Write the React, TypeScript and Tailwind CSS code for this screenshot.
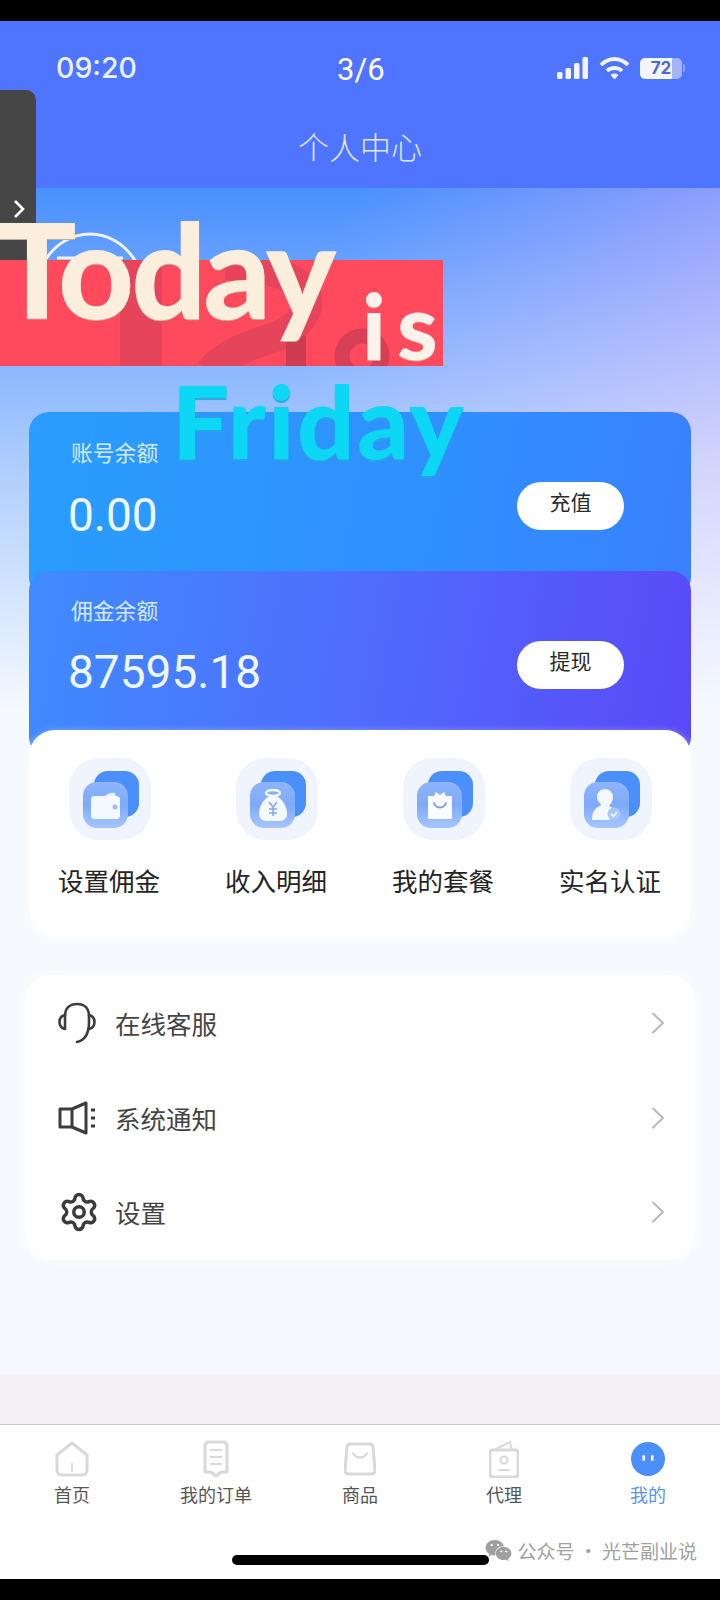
import { Settings } from "lucide-react";
import { FaWeixin } from "react-icons/fa";

const CJK = "font-['Noto_Sans_CJK_SC','Noto_Sans',sans-serif]";

function Chevron() {
  return (
    <svg width="14" height="22" viewBox="0 0 14 22" fill="none" stroke="#b8b8b8" strokeWidth="2">
      <path d="M2 1.5 12 11 2 20.5" strokeLinejoin="round" strokeLinecap="round" />
    </svg>
  );
}

function Headset() {
  return (
    <svg width="38" height="42" viewBox="0 0 38 42" fill="none" stroke="#3c3c3c" strokeWidth="2.6" strokeLinecap="round" strokeLinejoin="round">
      <path d="M7 14C7 6 12 2 19 2s12 4 12 12v6c0 11-3 18-12 20" />
      <path d="M7 13C3 14 1.500 17 1.500 20S3 26 7 27Z" />
      <path d="M31 13c4 1 5.500 4 5.500 7s-1.500 6-5.500 7" />
    </svg>
  );
}

function Speaker() {
  return (
    <svg width="38" height="34" viewBox="0 0 38 34" fill="none" stroke="#3c3c3c" strokeWidth="3" strokeLinejoin="round">
      <path d="M2 8h12v18H2Z" />
      <path d="M14 8 28 2v30L14 26" />
      <path d="M33 9h4M33 17h4M33 25h4" />
    </svg>
  );
}

function WalletGlyph() {
  return (
    <svg width="30" height="27" viewBox="0 0 30 27">
      <path d="M14 4c3-3 7-4 10-3l1 4Z" fill="#e6efff" />
      <rect x="0" y="4" width="29" height="23" rx="3.500" fill="#f4f8ff" />
      <circle cx="24" cy="15" r="2.500" fill="#9dbdf8" />
    </svg>
  );
}

function BagGlyph() {
  return (
    <svg width="28" height="32" viewBox="0 0 28 32" fill="none">
      <ellipse cx="14" cy="4" rx="7" ry="3" stroke="#f4f8ff" strokeWidth="2.400" />
      <path d="M9 8h10c5 3 9 10 9 17 0 4-3 7-7 7H7c-4 0-7-3-7-7 0-7 4-14 9-17Z" fill="#f4f8ff" />
      <path d="M10 13l4 5 4-5M14 18v9M10 20h8M10 24h8" stroke="#7fa8f5" strokeWidth="1.500" />
    </svg>
  );
}

function PackageGlyph() {
  return (
    <svg width="24" height="27" viewBox="0 0 24 27">
      <path d="M0 4h6l2-4 4 3 4-3 2 4h6v23H0Z" fill="#fbfcff" />
      <path d="M6 11c2 6 10 6 12 0" stroke="#6f97e8" strokeWidth="1.800" fill="none" strokeLinecap="round" />
    </svg>
  );
}

function PersonGlyph() {
  return (
    <svg width="30" height="33" viewBox="0 0 30 33">
      <path d="M13 0c5 0 8 4 8 8 0 4-2 7-4 9 2 1 4 2 6 3-4 2-6 6-5 11H0c0-7 2-11 6-13 2-1 3-2 3-3-2-1-4-4-4-7 0-4 3-8 8-8Z" fill="#f4f8ff" />
      <circle cx="22" cy="25" r="6.500" fill="#a9c6fb" />
      <path d="M19 25l2.500 2.500 3.500-4.500" stroke="#eef4ff" strokeWidth="1.800" fill="none" />
    </svg>
  );
}

function ActionItem({ label, glyph }: { label: string; glyph: React.ReactNode }) {
  return (
    <div className="flex flex-col items-center">
      <div className="relative ml-[2px] h-[82px] w-[82px] rounded-[30px] bg-[#f0f4fe]">
        <div className="absolute left-[25px] top-[13px] h-[46px] w-[45px] rounded-[14px] bg-[#4a8ffa]" />
        <div className="absolute left-[14px] top-[24px] flex h-[46px] w-[45px] items-center justify-center rounded-[14px] bg-gradient-to-b from-[#8fb5fb] via-[#7eaafa] to-[#a6c6fe]">
          {glyph}
        </div>
      </div>
      <span className="mt-[21px] whitespace-nowrap text-[25.5px] leading-[38px] text-[#242424]">{label}</span>
    </div>
  );
}

function MenuRow({ icon, label }: { icon: React.ReactNode; label: string }) {
  return (
    <div className="flex h-[94.5px] items-center pl-[33px] pr-[30px]">
      <div className="flex w-[57px] items-center">{icon}</div>
      <span className="flex-1 text-[25.5px] text-[#444]">{label}</span>
      <Chevron />
    </div>
  );
}

function BalanceCard({
  label,
  value,
  action,
  className,
  labelClass,
  valueClass,
  buttonClass,
}: {
  label: string;
  value: string;
  action: string;
  className: string;
  labelClass: string;
  valueClass: string;
  buttonClass: string;
}) {
  return (
    <div className={`rounded-[20px] pl-[42px] pr-[67px] ${className}`}>
      <div className={`text-[21.8px] leading-[32px] text-[#d6ebff] ${labelClass}`}>{label}</div>
      <div className={`flex items-start justify-between ${valueClass}`}>
        <span className="ml-[-3px] font-['Roboto',sans-serif] text-[46px] leading-[56px] text-[#eef7ff]">{value}</span>
        <button className={`h-[48px] w-[107px] rounded-full bg-white pb-[10px] text-[21px] leading-[32px] text-[#2b2b2b] ${buttonClass}`}>
          {action}
        </button>
      </div>
    </div>
  );
}

function TabItem({ icon, label, active }: { icon: React.ReactNode; label: string; active?: boolean }) {
  return (
    <div className="flex w-[144px] flex-col items-center">
      <div className="flex h-[38px] items-center justify-center">{icon}</div>
      <span className={`mt-[3px] text-[18px] leading-[26px] ${active ? "text-[#5b94e8]" : "text-[#555]"}`}>{label}</span>
    </div>
  );
}

function Sticker() {
  return (
    <div className="pointer-events-none absolute left-0 top-0 h-[500px] w-[720px] overflow-hidden font-['Lato',sans-serif] font-black">
      <svg className="absolute left-[38px] top-[228px]" width="110" height="36" viewBox="0 0 110 36" fill="none">
        <path d="M6 34C18 14 36 6 52 6s34 8 46 28" stroke="#eef3ff" strokeWidth="3" />
        <path d="M19 30h66" stroke="#eef3ff" strokeWidth="3" />
      </svg>
      <div className="absolute left-0 top-[260px] h-[106px] w-[443px] overflow-hidden bg-[#ff4a5e]">
        <svg width="443" height="106" viewBox="0 0 443 106" fill="none">
          <path d="M120 0h42v106h-42Z" fill="#e6445b" />
          <path d="M225 5C285 5 325 30 300 60 280 85 235 80 210 112" stroke="#e6445b" strokeWidth="30" />
          <path d="M286 76h20v30h-20Z" fill="#cf3c52" />
          <circle cx="362" cy="96" r="20" stroke="#d63f55" strokeWidth="15" />
        </svg>
      </div>
      <div className="absolute left-[-3px] top-[188px] text-[132px] leading-[160px] tracking-[-3px] text-[#fbeedd] [text-shadow:0_1px_0_#c9a898]">
        Today
      </div>
      <div className="absolute left-[362px] top-[269px] text-[92px] leading-[112px] tracking-[11px] text-[#fff2ea] [text-shadow:0_1px_0_#d9a0a0]">
        is
      </div>
      <div className="absolute left-[172px] top-[359px] text-[101px] leading-[122px] tracking-[2.500px] text-[#0cd7f4] [text-shadow:0_2px_1px_#2ba6e0]">
        Friday
      </div>
    </div>
  );
}

export default function App() {
  return (
    <div className={`relative flex h-[1600px] w-[720px] flex-col overflow-hidden bg-black ${CJK}`}>
      <div className="h-[21px] shrink-0 bg-black" />

      <header className="h-[167px] shrink-0 bg-[#4f74fe] text-white">
        <div className="flex items-center justify-between pl-[56px] pr-[35px] pt-[29px]">
          <span className="font-['Inter',sans-serif] text-[28.5px] font-medium leading-[36px] text-[#eaf0ff]">09:20</span>
          <div className="flex items-center">
            <svg width="31" height="22" viewBox="0 0 31 22" fill="#f2f5ff">
              <rect x="0" y="15" width="5.500" height="7" rx="1.500" />
              <rect x="8.500" y="11" width="5.500" height="11" rx="1.500" />
              <rect x="17" y="6" width="5.500" height="16" rx="1.500" />
              <rect x="25.500" y="0" width="5.500" height="22" rx="1.500" />
            </svg>
            <svg className="ml-[11px]" width="31" height="24" viewBox="0 0 31 24" fill="none" stroke="#f2f5ff" strokeWidth="3.800">
              <path d="M2 9c8-8 19-8 27 0" />
              <path d="M8 15c4-4 11-4 15 0" />
              <path d="M15.500 23l-3.500-4c2-1.500 5-1.500 7 0Z" fill="#f2f5ff" strokeWidth="1" />
            </svg>
            <div className="ml-[10px] flex items-center">
              <div className="h-[21px] w-[42px] rounded-[5px] bg-[linear-gradient(90deg,#f4f6ff_0%,#f4f6ff_76%,#a3b4f8_76%,#a3b4f8_100%)] text-center font-['Inter',sans-serif] text-[17px] font-bold leading-[21px] text-[#4a6ad8]">
                72
              </div>
              <div className="ml-[1px] h-[8px] w-[2px] rounded-r bg-[#8fa5f8]" />
            </div>
          </div>
        </div>
        <h1 className="mt-[38px] text-center text-[31px] font-light leading-[44px] text-[#dfe8ff]">个人中心</h1>
      </header>

      <main className="flex h-[1186px] shrink-0 flex-col bg-[linear-gradient(180deg,rgba(245,249,254,0)_0%,rgba(245,249,254,0.6)_24%,#f5f9fe_44%),linear-gradient(112deg,#4a90ff_30%,#b4a6fb_78%)] px-[29px] pt-[224px]">
        <BalanceCard
          label="账号余额"
          value="0.00"
          action="充值"
          labelClass="pt-[24px]"
          valueClass="mt-[19px]"
          buttonClass="mt-[-5px]"
          className="h-[185px] bg-[linear-gradient(100deg,#2a9dff_0%,#2f90fe_60%,#3a80fe_100%)]"
        />
        <BalanceCard
          label="佣金余额"
          value="87595.18"
          action="提现"
          labelClass="pt-[23px]"
          valueClass="mt-[18px]"
          buttonClass="mt-[-3px]"
          className="relative mt-[-26px] h-[186px] bg-[linear-gradient(100deg,#3f8cfe_0%,#4f6cfc_50%,#5a48f8_100%)]"
        />
        <section className="relative mt-[-27px] h-[205px] rounded-[26px] bg-white pt-[28px] shadow-[0_4px_10px_rgba(255,255,255,0.8)]">
          <div className="grid grid-cols-[repeat(4,102px)] gap-x-[65px] pl-[29px]">
            <ActionItem label="设置佣金" glyph={<WalletGlyph />} />
            <ActionItem label="收入明细" glyph={<BagGlyph />} />
            <ActionItem label="我的套餐" glyph={<PackageGlyph />} />
            <ActionItem label="实名认证" glyph={<PersonGlyph />} />
          </div>
        </section>
        <section className="-mx-[4px] mt-[40px] h-[285px] rounded-[26px] bg-white py-[1px] shadow-[0_0_10px_rgba(255,255,255,0.9)]">
          <MenuRow icon={<Headset />} label="在线客服" />
          <MenuRow icon={<Speaker />} label="系统通知" />
          <MenuRow icon={<Settings size={42} strokeWidth={2} color="#3c3c3c" />} label="设置" />
        </section>
      </main>

      <div className="h-[50px] shrink-0 bg-[#f4f1f6]" />

      <nav className="relative h-[155px] shrink-0 border-t border-[#c9c9c9] bg-white pt-[15px]">
        <div className="flex">
          <TabItem
            label="首页"
            icon={
              <svg width="34" height="36" viewBox="0 0 34 36" fill="none" stroke="#d9d9d9" strokeWidth="3" strokeLinejoin="round">
                <path d="M17 2 32 14v15c0 3-2 5-5 5H7c-3 0-5-2-5-5V14Z" />
                <path d="M17 23v7" strokeLinecap="round" strokeWidth="2" />
              </svg>
            }
          />
          <TabItem
            label="我的订单"
            icon={
              <svg width="26" height="38" viewBox="0 0 26 38" fill="none" stroke="#d9d9d9" strokeWidth="3" strokeLinejoin="round">
                <path d="M6 2h14c3 0 4 2 4 4v26h-6l-5 4-5-4H2V6c0-2 1-4 4-4Z" />
                <path d="M7 10h12M7 17h12M7 24h12" strokeWidth="2" />
              </svg>
            }
          />
          <TabItem
            label="商品"
            icon={
              <svg width="32" height="34" viewBox="0 0 32 34" fill="none" stroke="#d9d9d9" strokeWidth="3" strokeLinejoin="round">
                <path d="M6 2h20c2 0 3 1 3 3l2 23c0 3-2 4-4 4H5c-2 0-4-1-4-4L3 5c0-2 1-3 3-3Z" />
                <path d="M9 11c3 6 11 6 14 0" strokeLinecap="round" strokeWidth="2" />
              </svg>
            }
          />
          <TabItem
            label="代理"
            icon={
              <svg width="30" height="38" viewBox="0 0 30 38" fill="none" stroke="#d9d9d9" strokeWidth="3" strokeLinejoin="round">
                <path d="M3 10h24c1 0 2 1 2 2v22c0 2-1 3-3 3H4c-2 0-3-1-3-3V12c0-1 1-2 2-2Z" />
                <path d="M5 10 21 2l2 8" strokeWidth="2" />
                <circle cx="15" cy="20" r="3.500" strokeWidth="2" />
                <path d="M10 30h10" strokeLinecap="round" strokeWidth="2" />
              </svg>
            }
          />
          <TabItem
            active
            label="我的"
            icon={
              <svg width="34" height="34" viewBox="0 0 34 34">
                <ellipse cx="17" cy="17" rx="17" ry="17" fill="#4a8ffb" />
                <rect x="11.500" y="13" width="2.500" height="6" rx="1.200" fill="#fff" />
                <rect x="20" y="13" width="2.500" height="6" rx="1.200" fill="#fff" />
              </svg>
            }
          />
        </div>

        <div className="absolute right-[23px] top-[112px] flex items-center text-[19px] leading-[26px] text-[#a0a0a0]">
          <FaWeixin size={27} color="#a0a0a0" />
          <span className="ml-[5px] whitespace-nowrap">公众号 · 光芒副业说</span>
        </div>
        <div className="absolute left-[232px] top-[130px] h-[10px] w-[257px] rounded-full bg-black" />
      </nav>

      <div className="flex-1 bg-black" />

      <div className="absolute left-0 top-[90px] h-[170px] w-[36px] rounded-tr-[10px] bg-[#464646]">
        <svg className="absolute left-[12px] top-[109px]" width="14" height="20" viewBox="0 0 14 20" fill="none" stroke="#fff" strokeWidth="2.600">
          <path d="M3 2l8 8-8 8" />
        </svg>
      </div>

      <Sticker />

      <div className="absolute left-[337px] top-[52px] font-['Roboto',sans-serif] text-[31px] leading-[36px] text-white">3/6</div>
    </div>
  );
}
